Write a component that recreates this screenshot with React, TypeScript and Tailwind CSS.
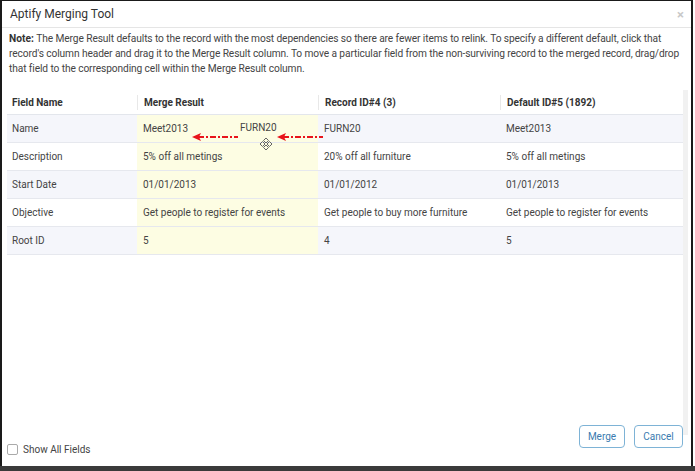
import { Check } from "lucide-react";

interface Row {
    field: string;
    merge: string;
    record: string;
    def: string;
}

const rows: Row[] = [
    { field: "Name", merge: "Meet2013", record: "FURN20", def: "Meet2013" },
    { field: "Description", merge: "5% off all metings", record: "20% off all furniture", def: "5% off all metings" },
    { field: "Start Date", merge: "01/01/2013", record: "01/01/2012", def: "01/01/2013" },
    { field: "Objective", merge: "Get people to register for events", record: "Get people to buy more furniture", def: "Get people to register for events" },
    { field: "Root ID", merge: "5", record: "4", def: "5" },
];

const cols = "grid grid-cols-[130px_181px_182px_183px]";

function DashArrow({ width }: { width: number }) {
    return (
        <svg width={width} height="10" viewBox={`0 0 ${width} 10`}>
            <line x1="6" y1="5" x2={width} y2="5" stroke="#e8141b" strokeWidth="2" strokeDasharray="6 2 2 2" />
            <path d="M0 5 L9 1 L7 5 L9 9 Z" fill="#e8141b" />
        </svg>
    );
}

function MoveIcon() {
    return (
        <svg width="14" height="14" viewBox="0 0 14 14" fill="none" stroke="#666" strokeWidth="1">
            <path d="M7 1 L9.5 3.5 L7 6 L4.5 3.5 Z" />
            <path d="M7 8 L9.5 10.5 L7 13 L4.5 10.5 Z" />
            <path d="M1 7 L3.5 4.5 L6 7 L3.5 9.5 Z" />
            <path d="M8 7 L10.5 4.5 L13 7 L10.5 9.5 Z" />
        </svg>
    );
}

export default function App() {
    return (
        <div
            className="w-[695px] h-[471px] bg-white flex flex-col overflow-hidden text-[#333]"
            style={{ fontFamily: "Roboto, 'Liberation Sans', sans-serif" }}
        >
            <div className="flex-1 w-[693px] border-l-2 border-t border-r-2 border-[#1a1a1a] flex flex-col min-h-0">
                {/* title */}
                <div className="h-[27px] flex items-center justify-between pl-[8px] pr-[7px] border-b border-[#e5e5e5]">
                    <span className="text-[12px] text-[#333]">Aptify Merging Tool</span>
                    <span className="text-[13px] leading-none text-[#c8c8c8] font-bold">×</span>
                </div>

                {/* note */}
                <p className="px-[7px] pt-[3px] text-[10.2px] leading-[15px] tracking-[-0.1px] text-[#444]">
                    <b className="font-bold text-[#333] tracking-normal">Note: </b>The Merge Result defaults to the record with the most dependencies so there are fewer items to relink. To specify a different default, click that record's column header and drag it to the Merge Result column. To move a particular field from the non-surviving record to the merged record, drag/drop that field to the corresponding cell within the Merge Result column.
                </p>

                {/* table */}
                <div className="flex flex-1 min-h-0 mt-[14px] pl-[5px]">
                    <div className="w-[676px] text-[10px] text-[#444] relative">
                        <div className={`${cols} h-[25px] items-center font-bold text-[#333] border-b border-[#e3e6ec]`}>
                            <div className="pl-[5px]">Field Name</div>
                            <div className="pl-[6px] border-l border-[#e8e8e8]">Merge Result</div>
                            <div className="pl-[6px] border-l border-[#e8e8e8]">Record ID#4 (3)</div>
                            <div className="pl-[6px] border-l border-[#e8e8e8]">Default ID#5 (1892)</div>
                        </div>
                        {rows.map((r, i) => (
                            <div
                                key={r.field}
                                className={`${cols} h-[28px] items-stretch border-b border-[#e6e8ee] ${i % 2 === 0 ? "bg-[#f5f6fb]" : "bg-white"}`}
                            >
                                <div className="pl-[5px] flex items-center">{r.field}</div>
                                <div className="pl-[6px] flex items-center bg-[#fdfde3]">{r.merge}</div>
                                <div className="pl-[6px] flex items-center">{r.record}</div>
                                <div className="pl-[6px] flex items-center">{r.def}</div>
                            </div>
                        ))}

                        {/* drag overlay */}
                        <div className="absolute left-[233px] top-[30px] text-[10px] text-[#444]">FURN20</div>
                        <div className="absolute left-[185px] top-[42px]">
                            <DashArrow width={46} />
                        </div>
                        <div className="absolute left-[270px] top-[42px]">
                            <DashArrow width={46} />
                        </div>
                        <div className="absolute left-[252px] top-[47px]">
                            <MoveIcon />
                        </div>
                    </div>
                    <div className="w-[5px] h-[345px] bg-[#f1f1f1]" />
                </div>

                {/* footer */}
                <div className="h-[40px] flex items-start justify-between pl-[5px] pr-[8px]">
                    <label className="flex items-center gap-[5px] mt-[16px] text-[10px] text-[#444]">
                        <span className="w-[11px] h-[11px] border border-[#aaa] rounded-[2px] bg-white flex items-center justify-center">
                            <Check size={0} />
                        </span>
                        Show All Fields
                    </label>
                    <div className="flex gap-[9px] -mt-[1px]">
                        <button className="h-[23px] w-[46px] rounded-[4px] border border-[#7eb3d6] text-[#3a7bb0] text-[10px] bg-white">
                            Merge
                        </button>
                        <button className="h-[23px] w-[49px] rounded-[4px] border border-[#7eb3d6] text-[#3a7bb0] text-[10px] bg-white">
                            Cancel
                        </button>
                    </div>
                </div>
            </div>
            <div className="h-[5px] bg-[#3a3a3a]" />
        </div>
    );
}
